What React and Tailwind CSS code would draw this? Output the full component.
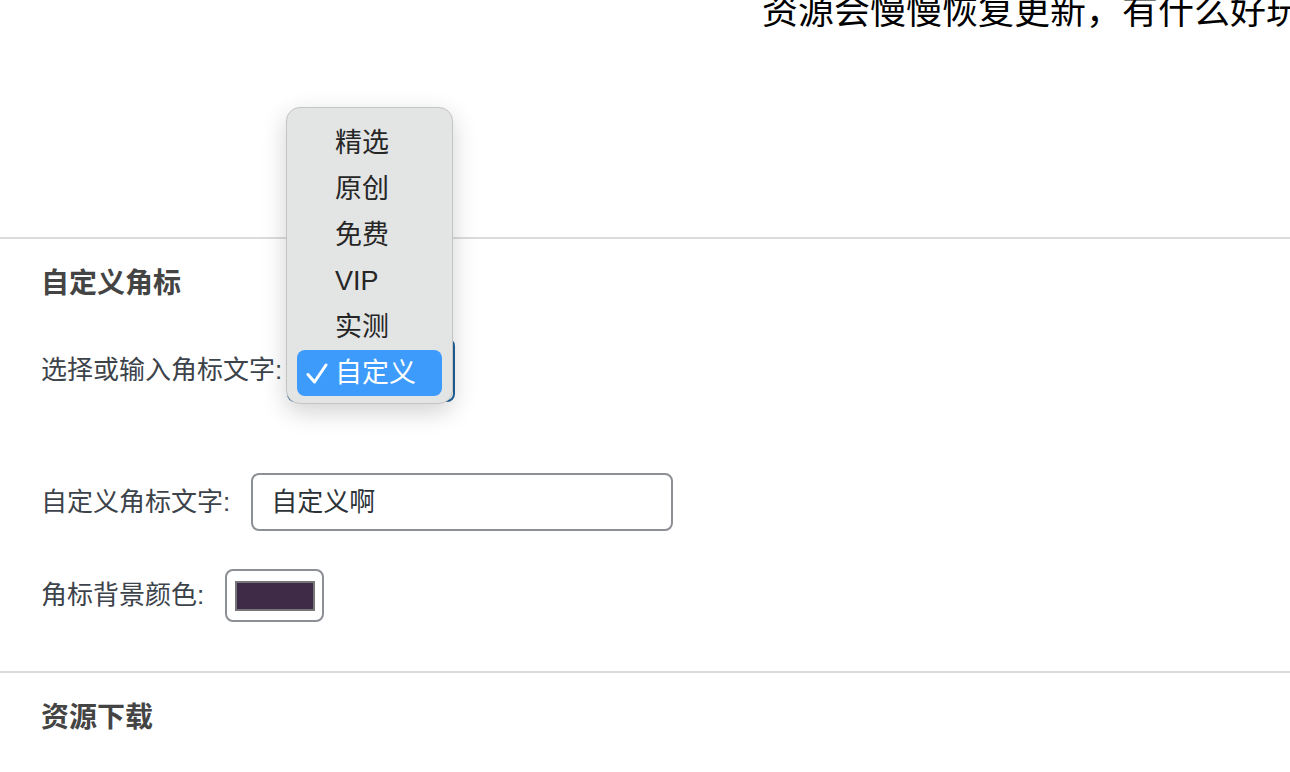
const FONT = { fontFamily: '"Liberation Sans", "Noto Sans CJK SC", sans-serif' };

const options = ['精选', '原创', '免费', 'VIP', '实测', '自定义'];

/**
 * Checkmark glyph used by the native popup
 */
const CheckMark = () => (
  <svg
    className="absolute left-[9px] top-[13px] w-[22px] h-[21px]"
    viewBox="0 0 22 21"
    fill="none"
    stroke="currentColor"
    strokeWidth="3"
    strokeLinecap="round"
    strokeLinejoin="round"
  >
    <path d="M2 11.5 8.5 19 20 2" />
  </svg>
);

/**
 * Native-looking select popup (open state)
 */
const SelectPopup = ({ selected }) => (
  <div className="absolute left-[286px] top-[107px] w-[167px] h-[297px] rounded-[14px] bg-[#e3e4e4] border border-[#c4c4c4] shadow-[0_8px_24px_rgba(0,0,0,0.18)] pt-[12px] px-[10px]">
    {options.map((opt) => {
      const active = opt === selected;
      return (
        <div
          key={opt}
          className={`relative h-[46px] w-[145px] flex items-center pl-[38px] text-[27px] rounded-[8px] ${
            active ? 'bg-[#3d9bfc] text-white' : 'text-[#262626]'
          }`}
        >
          {active && <CheckMark />}
          {opt}
        </div>
      );
    })}
  </div>
);

export default function App() {
  return (
    <div className="relative w-full h-[772px] overflow-hidden bg-white" style={FONT}>
      {/* Notice banner */}
      <div className="h-[237px] flex items-start overflow-hidden">
        <div className="pl-[762px] -mt-[6px] whitespace-nowrap text-[36px] leading-[36px] text-black">
          资源会慢慢恢复更新，有什么好玩的资源欢迎推荐
        </div>
      </div>

      <div className="border-t-2 border-[#dcdcde]" />

      {/* Custom badge */}
      <div className="px-[41px] pt-[25px] pb-[49px]">
        <h2 className="text-[28px] leading-[40px] font-bold text-[#444]">自定义角标</h2>

        <div className="mt-[34px] flex items-center h-[64px] text-[26px] text-[#3c434a]">
          <span>选择或输入角标文字:</span>
          <div className="ml-[5px] w-[168px] h-[64px] rounded-lg border-2 border-[#21629b] bg-white" />
        </div>

        <div className="mt-[71px] flex items-center text-[26px] text-[#3c434a]">
          <span>自定义角标文字:</span>
          <div className="ml-[21px] w-[422px] h-[58px] rounded-lg border-2 border-[#8c8f94] flex items-center pl-[18px] text-[#2c3338]">
            自定义啊
          </div>
        </div>

        <div className="mt-[38px] flex items-center text-[26px] text-[#3c434a]">
          <span>角标背景颜色:</span>
          <div className="ml-[21px] w-[99px] h-[53px] rounded-lg border-2 border-[#8c8f94] flex items-center justify-center">
            <div className="w-[80px] h-[30px] bg-[#3f2a47] border-2 border-[#777]" />
          </div>
        </div>
      </div>

      <div className="border-t-2 border-[#dcdcde]" />

      {/* Downloads */}
      <div className="px-[41px] pt-[25px]">
        <h2 className="text-[28px] leading-[40px] font-bold text-[#444]">资源下载</h2>
      </div>

      <SelectPopup selected="自定义" />
    </div>
  );
}
